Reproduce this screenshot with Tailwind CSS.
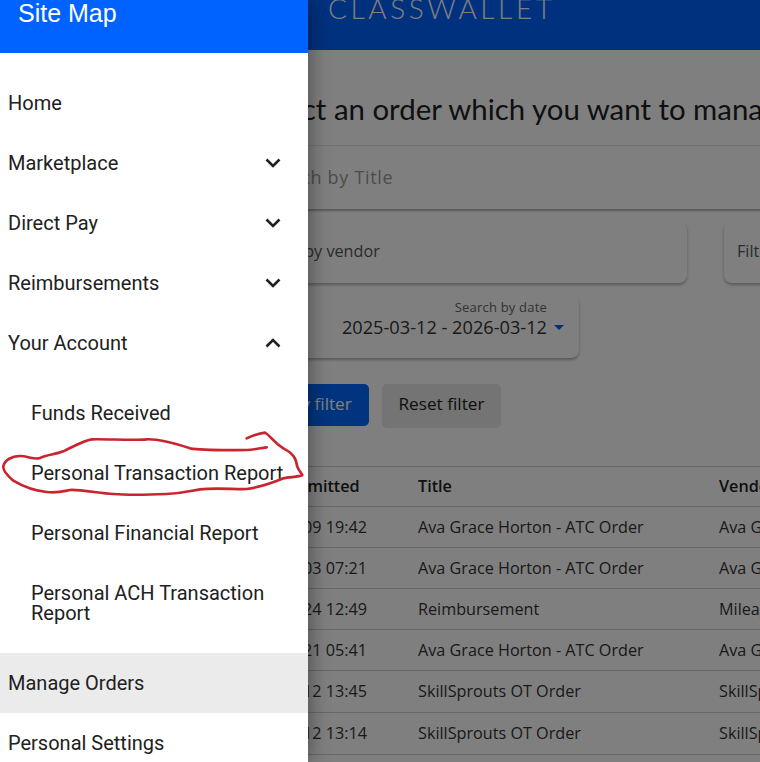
<!DOCTYPE html>
<html lang="en">
<head>
  <meta charset="UTF-8">
  <title>Manage Orders</title>
  <script src="https://cdn.jsdelivr.net/npm/@tailwindcss/browser@4"></script>
</head>
<body class="bg-white">
<div class="relative w-[760px] h-[762px] overflow-hidden bg-white font-['Open_Sans',sans-serif] text-[#212121]">

  <!-- page behind the drawer -->
  <header class="h-[50px] bg-[#0062ff] pl-[328px] overflow-hidden">
    <div class="-mt-[10px] font-['Lato',sans-serif] font-light text-[28px] leading-[36px] tracking-[3.6px] text-white whitespace-nowrap">CLASSWALLET</div>
  </header>

  <main class="w-[1000px] pl-[248px]">
    <h1 class="pt-[39px] h-[95px] font-['Lato',sans-serif] text-[29.4px] leading-[40px] whitespace-nowrap">Select an order which you want to manage</h1>

    <div class="h-[64px] w-[752px] border-t border-[#e4e4e4] flex items-center pl-[13px] shadow-[0_2px_2px_rgba(0,0,0,0.3)] rounded-[3px]">
      <span class="text-[18px] tracking-[0.7px] text-[#999]">Search by Title</span>
    </div>

    <div class="mt-[12px] flex gap-[37px]">
      <div class="w-[439px] h-[62px] shrink-0 rounded-lg shadow-[0_2px_3px_rgba(0,0,0,0.3)] flex items-center pl-[14px] pb-[1px] text-[16.2px] text-[#555]">Filter by vendor</div>
      <div class="w-[300px] h-[62px] shrink-0 rounded-lg shadow-[0_2px_3px_rgba(0,0,0,0.3)] flex items-center pl-[13px] pb-[1px] text-[16.2px] text-[#555]">Filter by status</div>
    </div>

    <div class="mt-[12px] w-[331px] h-[63px] rounded-lg shadow-[0_2px_3px_rgba(0,0,0,0.3)] flex flex-col items-end pr-[15px] pt-[3px]">
      <span class="pr-[17px] text-[13px] leading-[18px] tracking-[0.2px] text-[#666]">Search by date</span>
      <div class="flex items-center gap-[7px] text-[18.2px] leading-[22px] text-[#333]">
        <span>2025-03-12 - 2026-03-12</span>
        <span class="w-0 h-0 border-x-[5.5px] border-x-transparent border-t-[5px] border-t-[#0062ff]"></span>
      </div>
    </div>

    <div class="mt-[26px] flex items-start gap-[13px]">
      <button class="w-[121px] h-[42px] pb-[2px] rounded-[5px] bg-[#0068ff] text-white text-[17.2px]">Apply filter</button>
      <button class="w-[119px] h-[44px] pb-[4px] rounded-[5px] bg-[#e8e8e8] text-[#212121] text-[17.2px]">Reset filter</button>
    </div>

    <table class="mt-[38px] -ml-[11px] w-[700px] table-fixed border-t border-[#cfcfcf] text-[16.2px] text-left">
      <thead>
        <tr class="h-[40px] border-b border-[#cfcfcf]">
          <th class="w-[181px] font-semibold">Date Submitted</th>
          <th class="w-[301px] font-semibold">Title</th>
          <th class="font-semibold">Vendor</th>
        </tr>
      </thead>
      <tbody class="text-[#333]">
        <tr class="h-[41px] border-b border-[#cfcfcf]"><td>2026-02-09 19:42</td><td>Ava Grace Horton - ATC Order</td><td>Ava Grace Horton</td></tr>
        <tr class="h-[41px] border-b border-[#cfcfcf]"><td>2026-02-03 07:21</td><td>Ava Grace Horton - ATC Order</td><td>Ava Grace Horton</td></tr>
        <tr class="h-[41px] border-b border-[#cfcfcf]"><td>2026-01-24 12:49</td><td>Reimbursement</td><td>Mileage</td></tr>
        <tr class="h-[41px] border-b border-[#cfcfcf]"><td>2026-01-21 05:41</td><td>Ava Grace Horton - ATC Order</td><td>Ava Grace Horton</td></tr>
        <tr class="h-[42px] border-b border-[#cfcfcf]"><td>2026-01-12 13:45</td><td>SkillSprouts OT Order</td><td>SkillSprouts</td></tr>
        <tr class="h-[42px] border-b border-[#cfcfcf]"><td>2026-01-12 13:14</td><td>SkillSprouts OT Order</td><td>SkillSprouts</td></tr>
      </tbody>
    </table>
  </main>

  <!-- dim layer -->
  <div class="absolute inset-0 bg-black/50"></div>

  <!-- drawer -->
  <aside class="absolute left-0 top-0 bottom-0 w-[308px] bg-white font-[Roboto,sans-serif] text-[20px] leading-[20px] text-[#212121] shadow-[0_0_20px_rgba(0,0,0,0.45)]">
    <div class="h-[53px] bg-[#0062ff] pl-[18px] font-['Liberation_Sans',sans-serif] text-[25px] leading-[26px] text-white">Site Map</div>
    <nav class="pt-[20px]">
      <a class="flex items-center h-[60px] pl-[8px]">Home</a>
      <a class="flex items-center justify-between h-[60px] pl-[8px] pr-[27px]">Marketplace
        <svg class="w-[16px] h-[10px]" viewBox="0 0 16 10" fill="none" stroke="#212121" stroke-width="2.6"><path d="M1.5 1.5 8 8l6.5-6.5"/></svg>
      </a>
      <a class="flex items-center justify-between h-[60px] pl-[8px] pr-[27px]">Direct Pay
        <svg class="w-[16px] h-[10px]" viewBox="0 0 16 10" fill="none" stroke="#212121" stroke-width="2.6"><path d="M1.5 1.5 8 8l6.5-6.5"/></svg>
      </a>
      <a class="flex items-center justify-between h-[60px] pl-[8px] pr-[27px]">Reimbursements
        <svg class="w-[16px] h-[10px]" viewBox="0 0 16 10" fill="none" stroke="#212121" stroke-width="2.6"><path d="M1.5 1.5 8 8l6.5-6.5"/></svg>
      </a>
      <a class="flex items-center justify-between h-[60px] pl-[8px] pr-[27px]">Your Account
        <svg class="w-[16px] h-[10px]" viewBox="0 0 16 10" fill="none" stroke="#212121" stroke-width="2.6"><path d="M1.5 8.5 8 2l6.5 6.5"/></svg>
      </a>
      <div class="py-[10px]">
        <a class="flex items-center h-[60px] pl-[31px]">Funds Received</a>
        <a class="flex items-center h-[60px] pl-[31px]">Personal Transaction Report</a>
        <a class="flex items-center h-[60px] pl-[31px]">Personal Financial Report</a>
        <a class="flex items-center h-[80px] pl-[31px] pr-[30px]">Personal ACH Transaction Report</a>
      </div>
      <a class="flex items-center h-[60px] pl-[8px] bg-[#ebebeb]">Manage Orders</a>
      <a class="flex items-center h-[60px] pl-[8px]">Personal Settings</a>
    </nav>
  </aside>

  <!-- red pen annotation -->
  <svg class="absolute left-0 top-[420px] w-[320px] h-[100px]" viewBox="0 0 960 300" fill="none" stroke="#c9252f" stroke-width="8" stroke-linecap="round" stroke-linejoin="round">
    <path d="M740 55C755 48 775 40 795 38C810 45 815 62 850 85C880 100 888 115 892 140C896 150 903 158 907 165C895 172 870 170 850 175C825 185 790 200 740 207C710 209 650 202 600 208C570 212 550 220 500 222C450 224 390 226 340 222C300 220 240 208 210 210C190 214 170 220 140 216C100 212 70 200 40 182C20 165 8 150 10 138C15 120 35 108 60 108C85 108 100 120 120 114C140 104 165 104 190 94C220 80 250 62 275 58C310 56 400 62 440 58C480 56 530 72 570 85C610 92 680 90 740 90C760 90 780 84 800 82"/>
  </svg>
</div>
</body>
</html>
